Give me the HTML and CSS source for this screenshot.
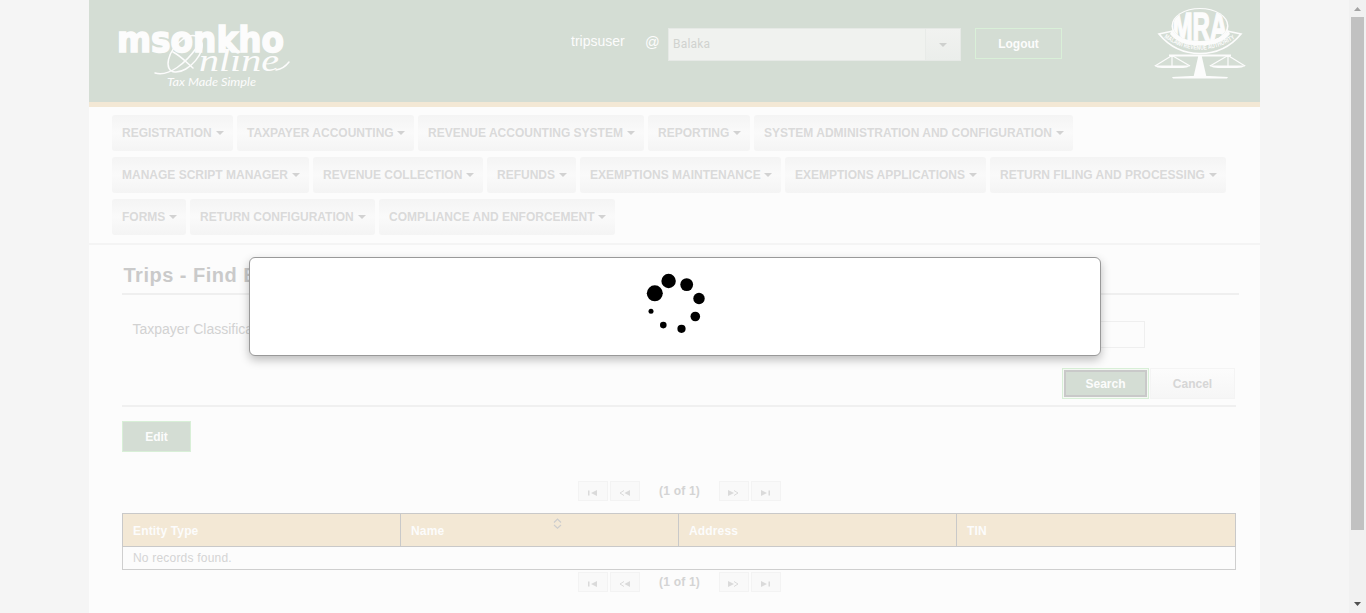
FILE: index.html
```html
<!DOCTYPE html>
<html lang="en">
<head>
<meta charset="utf-8">
<title>Msonkho Online</title>
<link rel="stylesheet" href="styles.css">
</head>
<body>
<div class="window">
<div class="page">
  <header class="header">
    <svg class="logo" width="180" height="72" viewBox="0 0 180 72">
      <text class="logo-name" x="2" y="32" textLength="167" lengthAdjust="spacingAndGlyphs">msonkho</text>
      <path class="swash" d="M40 53C54 57 71 43 82 27C88 16 79 12 68 19C52 31 48 51 60 52C74 53 92 31 86 21M58 32C66 36 72 43 78 48"/>
      <text class="logo-script" x="84" y="51" textLength="80" lengthAdjust="spacingAndGlyphs">nline</text>
      <path class="swash" d="M161 50C167 49 171 46 174 42"/>
      <text class="logo-tag" x="52" y="66" textLength="89" lengthAdjust="spacingAndGlyphs">Tax Made Simple</text>
    </svg>
    <div class="user">tripsuser</div>
    <div class="at">@</div>
    <div class="select"><span>Balaka</span><i class="select-btn"><b class="caret"></b></i></div>
    <div class="logout">Logout</div>
    <svg class="mra" width="94" height="72" viewBox="0 0 94 72">
      <defs><clipPath id="oval"><ellipse cx="47" cy="18.500" rx="27" ry="16.500"/></clipPath><path id="arc" d="M11 30.500Q47 55 83 30.500"/></defs>
      <path fill="none" stroke="#fcfcfc" stroke-width="1.700" d="M20 24L6 27Q22 46.500 47 46.500Q72 46.500 88 27L74 24"/>
      <ellipse cx="47" cy="19" rx="28.500" ry="18" fill="#fcfcfc"/>
      <ellipse cx="47" cy="18.500" rx="27" ry="16.500" fill="#d4ddd4"/>
      <g clip-path="url(#oval)"><text class="mra-name" x="19.500" y="33" textLength="55" lengthAdjust="spacingAndGlyphs">MRA</text></g>
      <path d="M19 23Q25 34 47 34Q69 34 75 23L77 27Q68 38.500 47 38.500Q26 38.500 17 27Z" fill="#fcfcfc"/>
      <text class="mra-sub"><textPath href="#arc" textLength="76" lengthAdjust="spacingAndGlyphs">MALAWI REVENUE AUTHORITY</textPath></text>
      <path fill="#fcfcfc" d="M16 47.500H78V49.500H16ZM45.500 48H48.500L53.500 70H40.500ZM19 70L47 68.500L75 70L74 71.500H20ZM1 58.500H37.500Q34 61 30 61H9Q4 61 1 58.500ZM56 58.500H93Q89 61 84 61H65Q60 61 56 58.500Z"/>
      <path fill="none" stroke="#fcfcfc" stroke-width="1.200" d="M19 48.500L2 59M19 48.500L37 59M19 48.500V59M75 48.500L57 59M75 48.500L92 59M75 48.500V59"/>
    </svg>
  </header>

  <nav class="menu">
    <div class="row r1"><a>REGISTRATION</a><a>TAXPAYER ACCOUNTING</a><a>REVENUE ACCOUNTING SYSTEM</a><a>REPORTING</a><a>SYSTEM ADMINISTRATION AND CONFIGURATION</a></div>
    <div class="row r2"><a>MANAGE SCRIPT MANAGER</a><a>REVENUE COLLECTION</a><a>REFUNDS</a><a>EXEMPTIONS MAINTENANCE</a><a>EXEMPTIONS APPLICATIONS</a><a>RETURN FILING AND PROCESSING</a></div>
    <div class="row r3"><a>FORMS</a><a>RETURN CONFIGURATION</a><a>COMPLIANCE AND ENFORCEMENT</a></div>
  </nav>

  <main class="content">
    <h1>Trips - Find E</h1>
    <div class="field"><label>Taxpayer Classification</label><input class="input" type="text"></div>
    <div class="actions"><div class="btn green search">Search</div><div class="btn cancel">Cancel</div></div>
    <div class="btn green edit">Edit</div>
    <div class="pager top">
      <i><svg width="10" height="6"><path d="M0 .5h1.500v5H0zM9 0v6L3 3z"/></svg></i><i><svg width="12" height="6"><path d="M11 0v6L5.500 3z"/><path class="ln" d="M5 .5L1 3L5 5.500"/></svg></i><span>(1 of 1)</span><i><svg width="12" height="6"><path d="M0 0v6L6 3z"/><path class="ln" d="M6 .5L10 3L6 5.500"/></svg></i><i><svg width="10" height="6"><path d="M0 0v6L6 3zM7.500 .5H9v5H7.500z"/></svg></i>
    </div>
    <table class="table">
      <colgroup><col class="c"><col class="c"><col class="c"><col></colgroup>
      <thead><tr><th>Entity Type</th><th>Name<svg class="sort" width="9" height="11"><path d="M1 4.500L4.500 1L8 4.500M1 7L4.500 10.200L8 7"/></svg></th><th>Address</th><th>TIN</th></tr></thead>
      <tbody><tr><td colspan="4">No records found.</td></tr></tbody>
    </table>
    <div class="pager">
      <i><svg width="10" height="6"><path d="M0 .5h1.500v5H0zM9 0v6L3 3z"/></svg></i><i><svg width="12" height="6"><path d="M11 0v6L5.500 3z"/><path class="ln" d="M5 .5L1 3L5 5.500"/></svg></i><span>(1 of 1)</span><i><svg width="12" height="6"><path d="M0 0v6L6 3z"/><path class="ln" d="M6 .5L10 3L6 5.500"/></svg></i><i><svg width="10" height="6"><path d="M0 0v6L6 3zM7.500 .5H9v5H7.500z"/></svg></i>
    </div>
  </main>
</div>
<div class="scrollbar">
  <svg width="17" height="17"><path fill="#a3a3a3" d="M5 11L8.500 7L12 11z"/></svg>
  <div class="thumb"></div>
  <svg class="down" width="17" height="17"><path fill="#505050" d="M5 6L8.500 10L12 6z"/></svg>
</div>
</div>
<div class="dialog">
  <svg width="60" height="62" viewBox="0 0 60 62">
    <circle cx="8.800" cy="20.300" r="8"/><circle cx="22.600" cy="8" r="7.200"/><circle cx="40.700" cy="11.600" r="6.400"/><circle cx="53" cy="25.500" r="5.700"/><circle cx="49.300" cy="43.500" r="4.800"/><circle cx="35.500" cy="55.800" r="4.100"/><circle cx="17.300" cy="52.100" r="3.300"/><circle cx="5" cy="38.300" r="2.500"/>
  </svg>
</div>
</body>
</html>
```
FILE: styles.css
```css
* { box-sizing: border-box; }
body { margin: 0; background: #f5f5f5; font-family: "Liberation Sans", Arial, sans-serif; font-size: 12px; color: #d4d4d4; }
.window { display: flex; height: 613px; overflow: hidden; }
.page { width: 1171px; margin: 0 89px; background: #fcfcfc; }

.header { display: flex; align-items: flex-start; height: 107px; background: #d4ddd4; border-bottom: 5px solid #f3e8d5; color: #fcfcfc; }
.logo { margin: 20px 0 0 26px; flex: none; overflow: visible; }
.logo-name { font: bold 35px "DejaVu Sans", sans-serif; fill: #fcfcfc; stroke: #fcfcfc; stroke-width: 1.6px; }
.logo-script { font: italic 32px "Liberation Serif", serif; fill: #fcfcfc; }
.logo-tag { font: italic 11px "Lato", sans-serif; fill: #fcfcfc; }
.swash { fill: none; stroke: #fcfcfc; stroke-width: 1.5; stroke-linecap: round; }
.user { width: 163px; margin: 33px 0 0 187px; padding-left: 89px; box-sizing: border-box; width: 163px; font-size: 14px; line-height: 17px; }
.at { width: 23px; margin-top: 34px; font-size: 14.5px; line-height: 17px; }
.select { display: flex; width: 293px; height: 33px; margin-top: 28px; border: 1px solid #e6e9e6; background: #f0f2ef; color: #d0d3cf; line-height: 31px; }
.select span { flex: 1; padding-left: 4px; font-family: Roboto, sans-serif; letter-spacing: .2px; }
.select-btn { display: flex; align-items: center; justify-content: center; width: 35px; border-left: 1px solid #e8ebe8; background: linear-gradient(#f1f2f0, #ebeeeb); }
.caret { border: 4px solid transparent; border-top-color: #ced0ce; border-bottom: 0; }
.logout { width: 87px; height: 31px; margin: 28px 0 0 14px; padding-top: 1px; border: 1px solid #d9f0d8; text-align: center; line-height: 29px; font-weight: bold; }
.mra { margin: 7px 0 0 91px; flex: none; }
.mra-name { font: bold 38px "Liberation Sans", sans-serif; fill: #fcfcfc; stroke: #fcfcfc; stroke-width: 1.5px; }
.mra-sub { font: bold 6.5px "Liberation Sans", sans-serif; fill: #fcfcfc; }

.menu { height: 138px; padding: 8px 23px 0; border-bottom: 2px solid #f4f4f4; }
.row { display: flex; gap: 4px; margin-bottom: 6px; }
.row a { display: flex; align-items: center; justify-content: space-between; height: 36px; padding: 0 9px 0 10px; border-radius: 3px; background: linear-gradient(#f4f4f4, #fafafa 50%, #f4f4f4); color: #dadada; font-weight: bold; white-space: nowrap; }
.row a::after { content: ""; border: 4px solid transparent; border-top-color: #d2d2d2; border-bottom: 0; }
.r1 a:nth-child(1) { width: 121px; }
.r1 a:nth-child(2) { width: 177px; }
.r1 a:nth-child(3) { width: 226px; }
.r1 a:nth-child(4) { width: 102px; }
.r1 a:nth-child(5) { width: 319px; }
.r2 a:nth-child(1) { width: 197px; }
.r2 a:nth-child(2) { width: 170px; }
.r2 a:nth-child(3) { width: 89px; }
.r2 a:nth-child(4), .r2 a:nth-child(5) { width: 201px; }
.r2 a:nth-child(6) { width: 236px; }
.r3 a:nth-child(1) { width: 74px; }
.r3 a:nth-child(2) { width: 185px; }
.r3 a:nth-child(3) { width: 236px; }

.content { padding: 0 24px 0 33px; }
h1 { width: 1117px; height: 50px; margin: 0; padding: 18px 0 0 1.5px; border-bottom: 2px solid #efefef; font-size: 20px; line-height: 24px; color: #cacaca; letter-spacing: .5px; white-space: nowrap; }
.field { display: flex; justify-content: space-between; padding: 26px 91px 0 10.5px; height: 73px; font-size: 14px; color: #d2d2d2; }
.field label { line-height: 17px; }
.input { width: 500px; height: 27px; border: 1px solid #efefef; background: #fcfcfc; }
.actions { display: flex; justify-content: flex-end; gap: 1px; height: 39px; padding-right: 1px; border-bottom: 2px solid #f0f0f0; }
.btn { height: 31px; padding-top: 1px; line-height: 29px; text-align: center; font-weight: bold; border: 1px solid #f4f4f4; }
.green { background: #d4ddd4; border-color: #d8efd7; color: #fcfcfc; }
.search { width: 87px; outline: 2px solid #c9c9c9; outline-offset: -4px; box-shadow: inset 0 0 0 1px #f5f9f4; }
.cancel { width: 85px; background: linear-gradient(#fcfcfc, #f6f6f6); color: #d6d6d6; }
.edit { width: 69px; margin-top: 14px; }
.pager { display: flex; justify-content: center; gap: 2px; height: 20px; margin: 2px 0 0 1px; }
.pager.top { margin: 29px 0 12px 1px; }
.pager i { display: flex; align-items: center; justify-content: center; width: 30px; padding-top: 3px; border: 1px solid #f3f3f3; background: #f9f9f9; }
.pager span { width: 77px; text-align: center; line-height: 20px; font-weight: bold; letter-spacing: .2px; }
.pager span { width: 75px; }
.pager path { fill: #dadada; }
.pager .ln { fill: none; stroke: #dadada; }
.table { width: 1114px; table-layout: fixed; border-collapse: collapse; }
.c { width: 278px; }
th, td { border: 1px solid #c9c9c9; padding: 0 10px; text-align: left; letter-spacing: .15px; }
th { height: 33px; padding-top: 2px; background: #f3e8d5; color: #fcfcfc; }
td { height: 23px; line-height: 20px; border-color: #cfcfcf; letter-spacing: .2px; }
.sort { float: right; margin: -6px 106px 0 0; fill: none; stroke: #cdcdcd; stroke-width: 1.2; }

.scrollbar { display: flex; flex-direction: column; width: 17px; background: #f1f1f1; flex: none; }
.thumb { width: 13px; height: 513px; margin-left: 2px; background: #c1c1c1; }
.down { margin-top: auto; }
.dialog { position: absolute; left: 249px; top: 257px; width: 852px; height: 99px; padding: 15px 0 0 396px; border: 1px solid #999; border-radius: 6px; background: #fff; box-shadow: 0 4px 10px rgba(0,0,0,.25); }
```
